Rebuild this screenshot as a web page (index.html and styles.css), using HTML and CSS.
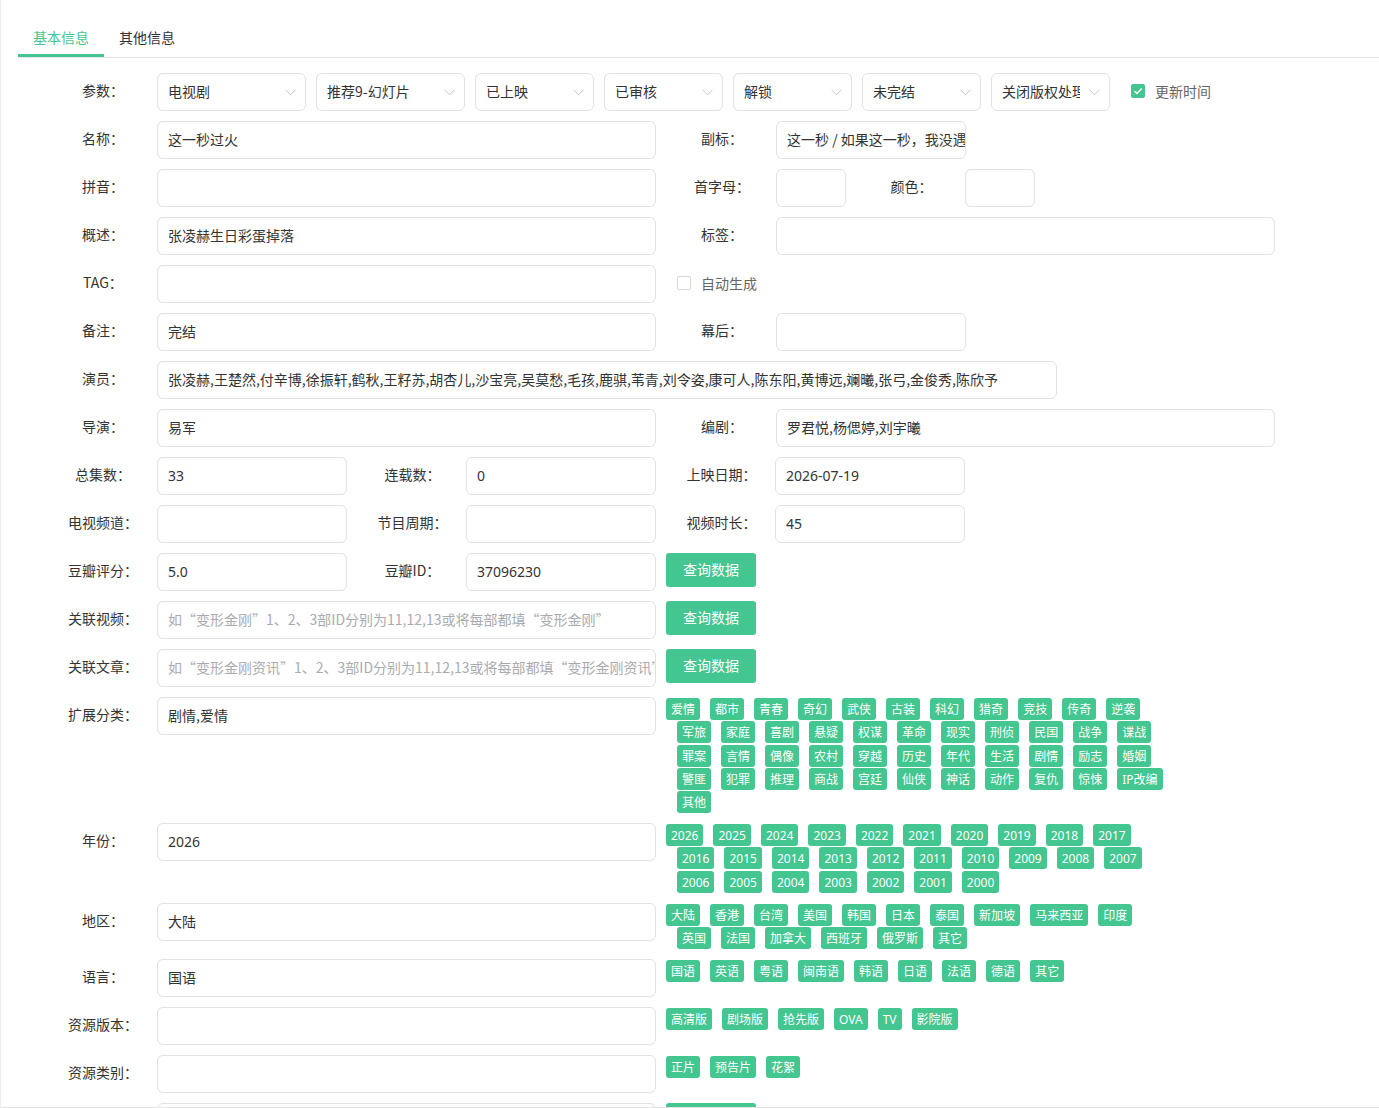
FILE: index.html
```html
<!DOCTYPE html>
<html lang="zh-CN">
<head>
    <meta charset="UTF-8">
    <meta name="viewport" content="width=device-width, initial-scale=1.0">
    <title>编辑视频 - 基本信息</title>
    <link rel="stylesheet" href="styles.css">
</head>
<body>
<div class="page">
    <!-- 选项卡 -->
    <div class="tabs">
        <div class="tab active">基本信息</div>
        <div class="tab">其他信息</div>
    </div>

    <form class="form">
        <!-- 参数 -->
        <div class="row">
            <label class="label">参数：</label>
            <div class="selects">
                <div class="select w-149"><span>电视剧</span><svg class="arrow" viewBox="0 0 11 7" width="11" height="7"><path d="M0.5 0.8l5 5 5-5" /></svg></div>
                <div class="select w-149"><span>推荐9-幻灯片</span><svg class="arrow" viewBox="0 0 11 7" width="11" height="7"><path d="M0.5 0.8l5 5 5-5" /></svg></div>
                <div class="select w-119"><span>已上映</span><svg class="arrow" viewBox="0 0 11 7" width="11" height="7"><path d="M0.5 0.8l5 5 5-5" /></svg></div>
                <div class="select w-119"><span>已审核</span><svg class="arrow" viewBox="0 0 11 7" width="11" height="7"><path d="M0.5 0.8l5 5 5-5" /></svg></div>
                <div class="select w-119"><span>解锁</span><svg class="arrow" viewBox="0 0 11 7" width="11" height="7"><path d="M0.5 0.8l5 5 5-5" /></svg></div>
                <div class="select w-119"><span>未完结</span><svg class="arrow" viewBox="0 0 11 7" width="11" height="7"><path d="M0.5 0.8l5 5 5-5" /></svg></div>
                <div class="select w-119"><span>关闭版权处理</span><svg class="arrow" viewBox="0 0 11 7" width="11" height="7"><path d="M0.5 0.8l5 5 5-5" /></svg></div>
            </div>
            <label class="check">
                <span class="box checked"><svg viewBox="0 0 14 14" width="14" height="14"><path d="M3.4 7.1l2.5 2.5 4.8-5" /></svg></span>
                更新时间
            </label>
        </div>

        <div class="row">
            <label class="label">名称：</label>
            <input class="input w-500" type="text" value="这一秒过火">
            <label class="label">副标：</label>
            <input class="input w-190" type="text" value="这一秒 / 如果这一秒，我没遇见你">
        </div>

        <div class="row">
            <label class="label">拼音：</label>
            <input class="input w-500" type="text">
            <label class="label">首字母：</label>
            <input class="input w-70" type="text">
            <label class="label narrow">颜色：</label>
            <input class="input w-70" type="text">
        </div>

        <div class="row">
            <label class="label">概述：</label>
            <input class="input w-500" type="text" value="张凌赫生日彩蛋掉落">
            <label class="label">标签：</label>
            <input class="input w-500" type="text">
        </div>

        <div class="row">
            <label class="label">TAG：</label>
            <input class="input w-500" type="text">
            <label class="check">
                <span class="box"></span>
                自动生成
            </label>
        </div>

        <div class="row">
            <label class="label">备注：</label>
            <input class="input w-500" type="text" value="完结">
            <label class="label">幕后：</label>
            <input class="input w-190" type="text">
        </div>

        <div class="row">
            <label class="label">演员：</label>
            <input class="input w-900" type="text" value="张凌赫,王楚然,付辛博,徐振轩,鹤秋,王籽苏,胡杏儿,沙宝亮,吴莫愁,毛孩,鹿骐,苇青,刘令姿,康可人,陈东阳,黄博远,斓曦,张弓,金俊秀,陈欣予">
        </div>

        <div class="row">
            <label class="label">导演：</label>
            <input class="input w-500" type="text" value="易军">
            <label class="label">编剧：</label>
            <input class="input w-500" type="text" value="罗君悦,杨偲婷,刘宇曦">
        </div>

        <div class="row">
            <label class="label">总集数：</label>
            <input class="input w-190 num" type="text" value="33">
            <label class="label narrow">连载数：</label>
            <input class="input w-190 num" type="text" value="0">
            <label class="label narrow">上映日期：</label>
            <input class="input w-190 num" type="text" value="2026-07-19">
        </div>

        <div class="row">
            <label class="label">电视频道：</label>
            <input class="input w-190" type="text">
            <label class="label narrow">节目周期：</label>
            <input class="input w-190" type="text">
            <label class="label narrow">视频时长：</label>
            <input class="input w-190 num" type="text" value="45">
        </div>

        <div class="row">
            <label class="label">豆瓣评分：</label>
            <input class="input w-190 num" type="text" value="5.0">
            <label class="label narrow">豆瓣ID：</label>
            <input class="input w-190 num" type="text" value="37096230">
            <button type="button" class="btn">查询数据</button>
        </div>

        <div class="row">
            <label class="label">关联视频：</label>
            <input class="input w-500" type="text" placeholder="如“变形金刚”1、2、3部ID分别为11,12,13或将每部都填“变形金刚”">
            <button type="button" class="btn">查询数据</button>
        </div>

        <div class="row">
            <label class="label">关联文章：</label>
            <input class="input w-500" type="text" placeholder="如“变形金刚资讯”1、2、3部ID分别为11,12,13或将每部都填“变形金刚资讯”">
            <button type="button" class="btn">查询数据</button>
        </div>

        <div class="row">
            <label class="label">扩展分类：</label>
            <input class="input w-500" type="text" value="剧情,爱情">
            <div class="tags">
                <span class="tag">爱情</span><span class="tag">都市</span><span class="tag">青春</span><span class="tag">奇幻</span><span class="tag">武侠</span><span class="tag">古装</span><span class="tag">科幻</span><span class="tag">猎奇</span><span class="tag">竞技</span><span class="tag">传奇</span><span class="tag">逆袭</span>
                <span class="tag">军旅</span><span class="tag">家庭</span><span class="tag">喜剧</span><span class="tag">悬疑</span><span class="tag">权谋</span><span class="tag">革命</span><span class="tag">现实</span><span class="tag">刑侦</span><span class="tag">民国</span><span class="tag">战争</span><span class="tag">谍战</span>
                <span class="tag">罪案</span><span class="tag">言情</span><span class="tag">偶像</span><span class="tag">农村</span><span class="tag">穿越</span><span class="tag">历史</span><span class="tag">年代</span><span class="tag">生活</span><span class="tag">剧情</span><span class="tag">励志</span><span class="tag">婚姻</span>
                <span class="tag">警匪</span><span class="tag">犯罪</span><span class="tag">推理</span><span class="tag">商战</span><span class="tag">宫廷</span><span class="tag">仙侠</span><span class="tag">神话</span><span class="tag">动作</span><span class="tag">复仇</span><span class="tag">惊悚</span><span class="tag">IP改编</span>
                <span class="tag">其他</span>
            </div>
        </div>

        <div class="row">
            <label class="label">年份：</label>
            <input class="input w-500 num" type="text" value="2026">
            <div class="tags">
                <span class="tag">2026</span><span class="tag">2025</span><span class="tag">2024</span><span class="tag">2023</span><span class="tag">2022</span><span class="tag">2021</span><span class="tag">2020</span><span class="tag">2019</span><span class="tag">2018</span><span class="tag">2017</span>
                <span class="tag">2016</span><span class="tag">2015</span><span class="tag">2014</span><span class="tag">2013</span><span class="tag">2012</span><span class="tag">2011</span><span class="tag">2010</span><span class="tag">2009</span><span class="tag">2008</span><span class="tag">2007</span>
                <span class="tag">2006</span><span class="tag">2005</span><span class="tag">2004</span><span class="tag">2003</span><span class="tag">2002</span><span class="tag">2001</span><span class="tag">2000</span>
            </div>
        </div>

        <div class="row">
            <label class="label">地区：</label>
            <input class="input w-500" type="text" value="大陆">
            <div class="tags">
                <span class="tag">大陆</span><span class="tag">香港</span><span class="tag">台湾</span><span class="tag">美国</span><span class="tag">韩国</span><span class="tag">日本</span><span class="tag">泰国</span><span class="tag">新加坡</span><span class="tag">马来西亚</span><span class="tag">印度</span>
                <span class="tag">英国</span><span class="tag">法国</span><span class="tag">加拿大</span><span class="tag">西班牙</span><span class="tag">俄罗斯</span><span class="tag">其它</span>
            </div>
        </div>

        <div class="row">
            <label class="label">语言：</label>
            <input class="input w-500" type="text" value="国语">
            <div class="tags">
                <span class="tag">国语</span><span class="tag">英语</span><span class="tag">粤语</span><span class="tag">闽南语</span><span class="tag">韩语</span><span class="tag">日语</span><span class="tag">法语</span><span class="tag">德语</span><span class="tag">其它</span>
            </div>
        </div>

        <div class="row">
            <label class="label">资源版本：</label>
            <input class="input w-500" type="text">
            <div class="tags">
                <span class="tag">高清版</span><span class="tag">剧场版</span><span class="tag">抢先版</span><span class="tag">OVA</span><span class="tag">TV</span><span class="tag">影院版</span>
            </div>
        </div>

        <div class="row">
            <label class="label">资源类别：</label>
            <input class="input w-500" type="text">
            <div class="tags">
                <span class="tag">正片</span><span class="tag">预告片</span><span class="tag">花絮</span>
            </div>
        </div>

        <div class="row">
            <label class="label">海报：</label>
            <input class="input w-500" type="text">
            <button type="button" class="btn">上传图片</button>
        </div>
    </form>
</div>
</body>
</html>
```

FILE: styles.css
```css
body {
    margin: 0;
    background: #fff;
    font-family: "Noto Sans CJK SC", "Noto Sans", sans-serif;
    font-size: 14px;
    color: #333;
}

/* 页面外框 */
.page {
    height: 1108px;
    box-sizing: border-box;
    overflow: hidden;
    padding-top: 18px;
    border-left: 1px solid #ececec;
    border-bottom: 1px solid #e4e4e4;
}

/* 选项卡 */
.tabs {
    display: flex;
    margin-left: 17px;
    border-bottom: 1px solid #e4e7ed;
}

.tab {
    height: 39px;
    line-height: 39px;
    padding: 0 15px;
    color: #303133;
    cursor: pointer;
}

.tab.active {
    color: #43c690;
    box-shadow: inset 0 -3px 0 #43c690;
}

/* 表单 */
.form {
    margin-top: 15px;
    padding-left: 36px;
}

.row {
    display: flex;
    align-items: flex-start;
    margin-bottom: 10px;
}

.label {
    flex-shrink: 0;
    width: 120px;
    box-sizing: border-box;
    padding-left: 12px;
    line-height: 35px;
    text-align: center;
    color: #333;
}

.label.narrow {
    width: 119px;
}

.input {
    flex-shrink: 0;
    height: 38px;
    box-sizing: border-box;
    border: 1px solid #e2e2e2;
    border-radius: 6px;
    padding: 0 0 2px 10px;
    font-family: inherit;
    font-size: 14px;
    color: #333;
    background: #fff;
    outline: none;
}

.input.num {
    font-family: "Noto Sans", "Noto Sans CJK SC", sans-serif;
}

.input::placeholder {
    color: #a9abb0;
}

.w-70 { width: 70px; }
.w-119 { width: 119px; }
.w-149 { width: 149px; }
.w-190 { width: 190px; }
.w-500 { width: 499px; }
.w-900 { width: 900px; }

/* 下拉框 */
.selects {
    display: flex;
    gap: 10px;
}

.select {
    display: flex;
    align-items: center;
    height: 38px;
    box-sizing: border-box;
    border: 1px solid #e2e2e2;
    border-radius: 6px;
    padding: 0 9px 0 10px;
    cursor: pointer;
}

.select span {
    flex: 1;
    min-width: 0;
    margin-top: -2px;
    overflow: hidden;
    white-space: nowrap;
}

.select .arrow {
    flex-shrink: 0;
    margin-left: 9px;
}

.select .arrow path {
    fill: none;
    stroke: #c0c4cc;
    stroke-width: 1;
}

/* 复选框 */
.check {
    display: flex;
    align-items: center;
    height: 36px;
    margin-left: 21px;
    color: #666;
    cursor: pointer;
}

.check .box {
    width: 14px;
    height: 14px;
    margin-right: 10px;
    box-sizing: border-box;
    border: 1px solid #d6d8dc;
    border-radius: 2px;
    background: #fff;
}

.check .box.checked {
    border-color: #43c690;
    background: #43c690;
}

.check .box svg {
    display: block;
    margin: -1px;
}

.check .box path {
    fill: none;
    stroke: #fff;
    stroke-width: 1.4;
}

/* 按钮 */
.btn {
    flex-shrink: 0;
    width: 90px;
    height: 34px;
    margin-left: 10px;
    padding: 0 0 2px;
    border: none;
    border-radius: 3px;
    background: #43c690;
    color: #fff;
    font-family: inherit;
    font-size: 14px;
    cursor: pointer;
}

/* 快捷标签 */
.tags {
    display: flex;
    flex-wrap: wrap;
    gap: 1.3px 10px;
    width: 504px;
    box-sizing: border-box;
    margin: 1px 0 0 10px;
    padding-left: 11px;
}

.tags .tag:first-child {
    margin-left: -11px;
}

.tag {
    height: 22px;
    box-sizing: border-box;
    padding: 2px 5px 0;
    line-height: 20px;
    border-radius: 3px;
    background: #43c690;
    color: #fff;
    font-family: "Noto Sans", "Noto Sans CJK SC", sans-serif;
    font-size: 12px;
    white-space: nowrap;
    cursor: pointer;
}
```
